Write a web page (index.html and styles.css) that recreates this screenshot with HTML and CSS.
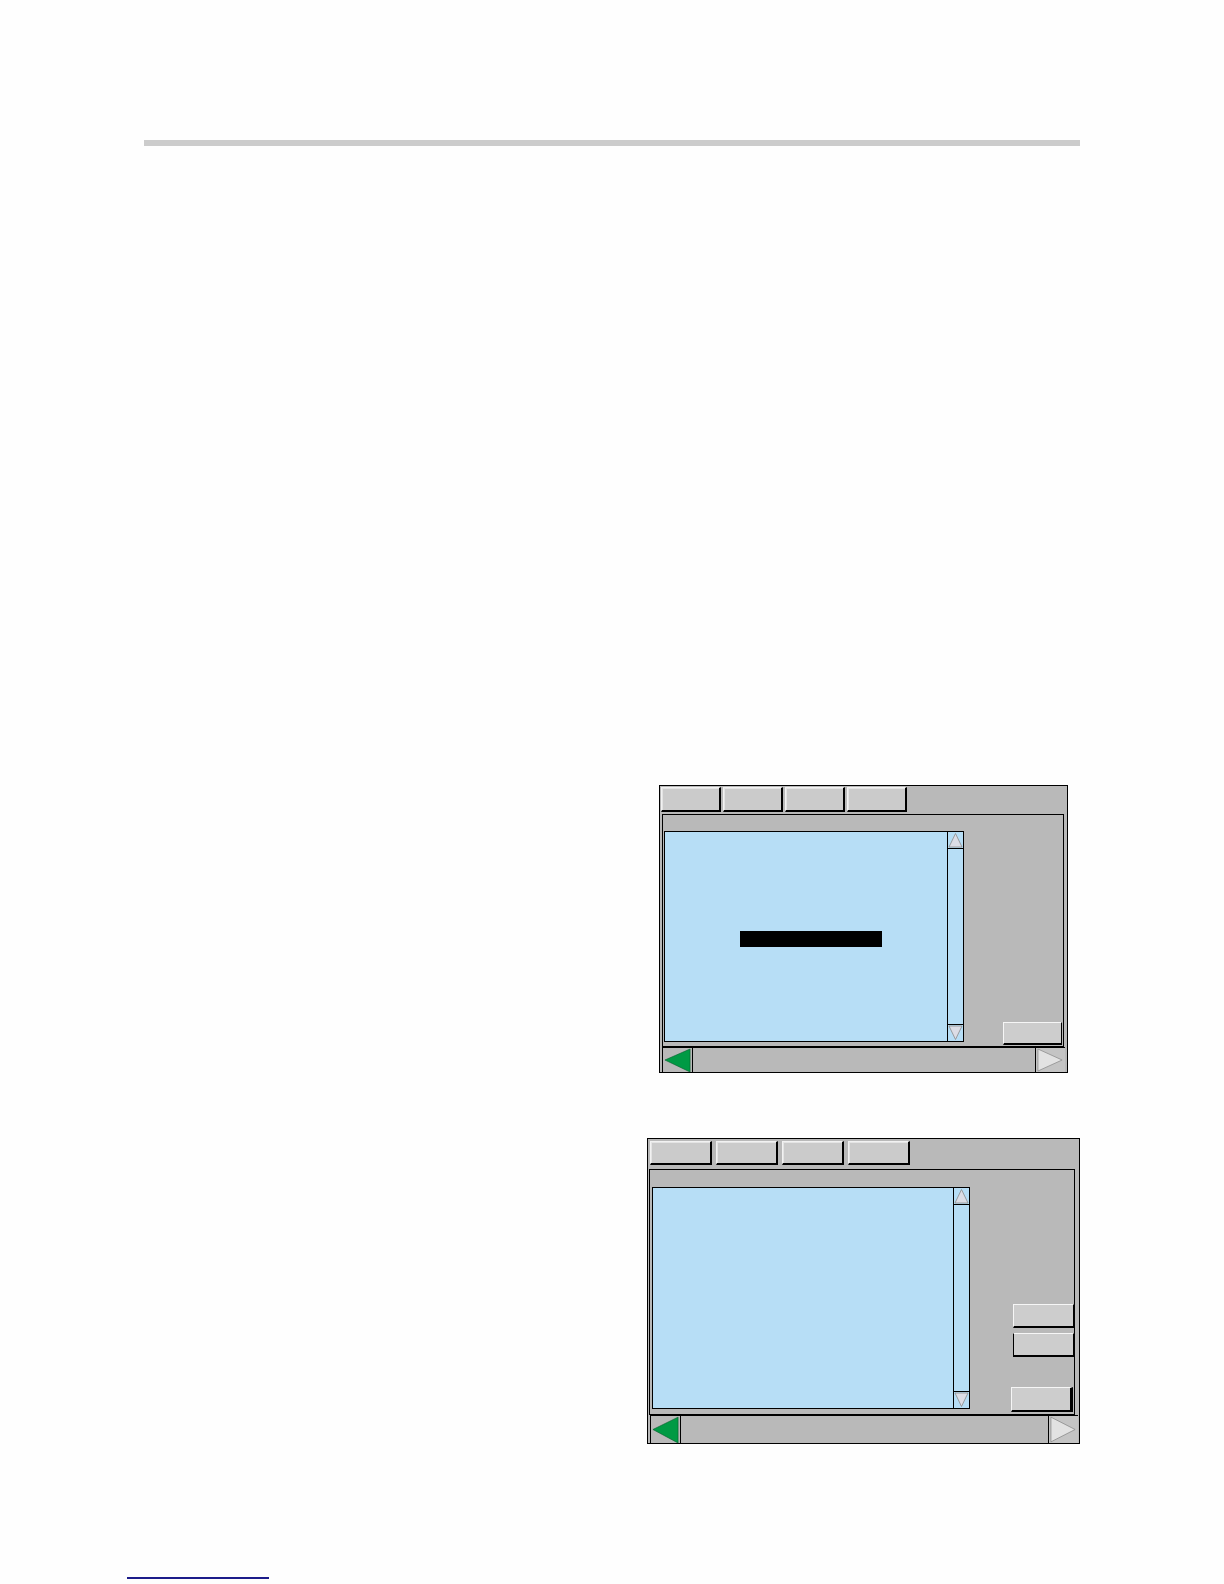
FILE: index.html
```html
<!DOCTYPE html>
<html lang="en">
<head>
<meta charset="utf-8">
<title>Dialogs</title>
<link rel="stylesheet" href="styles.css">
</head>
<body>
<div class="page">
  <div class="rule"></div>

  <div class="dlg dlg1">
    <div class="tabs">
      <div class="tab"></div><div class="tab"></div><div class="tab"></div><div class="tab"></div>
    </div>
    <div class="panel">
      <div class="list">
        <div class="list-body"><div class="blackbar"></div></div>
        <div class="scroll">
          <div class="arrow up"><svg viewBox="0 0 15 16" preserveAspectRatio="none"><polygon points="7.5,1.5 14,15 1,15" class="tri-s"/></svg></div>
          <div class="track"></div>
          <div class="arrow down"><svg viewBox="0 0 15 16" preserveAspectRatio="none"><polygon points="1,1 14,1 7.5,14.5" class="tri-s"/></svg></div>
        </div>
      </div>
      <div class="side">
        <div class="btn b-ok"></div>
      </div>
    </div>
    <div class="navbar">
      <div class="nav prev"><svg viewBox="0 0 30 24" preserveAspectRatio="none"><polygon points="2,12 28,1 28,24" class="tri-g"/></svg></div>
      <div class="nav-fill"></div>
      <div class="nav next"><svg viewBox="0 0 30 24" preserveAspectRatio="none"><polygon points="2,1 27,12 2,23" class="tri-n"/></svg></div>
    </div>
  </div>

  <div class="dlg dlg2">
    <div class="tabs">
      <div class="tab"></div><div class="tab"></div><div class="tab"></div><div class="tab"></div>
    </div>
    <div class="panel">
      <div class="list">
        <div class="list-body"></div>
        <div class="scroll">
          <div class="arrow up"><svg viewBox="0 0 15 16" preserveAspectRatio="none"><polygon points="7.5,1.5 14,15 1,15" class="tri-s"/></svg></div>
          <div class="track"></div>
          <div class="arrow down"><svg viewBox="0 0 15 16" preserveAspectRatio="none"><polygon points="1,1 14,1 7.5,14.5" class="tri-s"/></svg></div>
        </div>
      </div>
      <div class="side">
        <div class="btn b-a"></div>
        <div class="btn b-b"></div>
        <div class="btn b-c"></div>
      </div>
    </div>
    <div class="navbar">
      <div class="nav prev"><svg viewBox="0 0 30 24" preserveAspectRatio="none"><polygon points="2,12 28,1 28,24" class="tri-g"/></svg></div>
      <div class="nav-fill"></div>
      <div class="nav next"><svg viewBox="0 0 30 24" preserveAspectRatio="none"><polygon points="2,1 27,12 2,23" class="tri-n"/></svg></div>
    </div>
  </div>

  <div class="footline"></div>
</div>
</body>
</html>
```

FILE: styles.css
```css
* { box-sizing: border-box; }
html, body { margin: 0; padding: 0; background: #fefefe; font-family: "Liberation Sans", Arial, sans-serif; }
.page { display: flow-root; padding-top: 140px; width: 1224px; min-height: 1584px; }

.rule { margin-left: 144px; width: 936px; height: 6px; background: #cccccc; }

.dlg { display: flex; flex-direction: column; border: 1px solid #000; background: #b9b9b9; }
.dlg1 { margin: 639px 0 0 659px; width: 409px; height: 288px; }
.dlg2 { margin: 65px 0 0 647px; width: 433px; height: 306px; }

.tabs { display: flex; }
.dlg1 .tabs { padding: 1px 0 0 1px; gap: 2px; }
.dlg2 .tabs { padding: 2px 0 0 2px; gap: 4px; }
.tab { background: #cbcbcb; border-style: solid; border-width: 1px 2px 2px 1px; border-color: #f2f2f2 #000 #000 #f2f2f2; box-shadow: inset 1px 1px 0 #e4e4e4; }
.dlg1 .tab { width: 60px; height: 25px; }
.dlg2 .tab { width: 62px; height: 24px; }

.panel { display: flex; align-items: flex-end; border: 1px solid #000; background: #b9b9b9; }
.dlg1 .panel { margin: 2px 3px 0 2px; height: 233px; padding-left: 1px; }
.dlg2 .panel { margin: 4px 4px 0 1px; height: 246px; padding-left: 2px; }

.list { display: flex; border: 1px solid #000; background: #b7def6; }
.dlg1 .list { width: 300px; height: 211px; margin-bottom: 4px; }
.dlg2 .list { width: 318px; height: 222px; margin-bottom: 5px; }
.list-body { flex: 1; }
.dlg1 .list-body { padding: 99px 0 0 75px; }
.blackbar { width: 142px; height: 16px; background: #000; }

.scroll { width: 16px; border-left: 1px solid #000; display: flex; flex-direction: column; background: #b7def6; }
.arrow { height: 17px; }
.arrow svg { display: block; width: 100%; height: 100%; }
.arrow.up { border-bottom: 1px solid #000; }
.arrow.down { border-top: 1px solid #000; }
.track { flex: 1; }
.tri-s { fill: #dcdde6; stroke: #8a8a8a; stroke-width: 0.8; }

.side { margin-left: auto; display: flex; flex-direction: column; align-items: flex-end; }
.btn { background: #cdcdcd; border-style: solid; border-width: 1px 1px 2px 1px; border-color: #f6f6f6 #000 #000 #f6f6f6; }
.b-ok { width: 59px; height: 23px; margin: 0 1px 1px 0; }
.b-a { width: 61px; height: 24px; }
.b-b { width: 61px; height: 24px; margin-top: 5px; border-left-color: #000; }
.b-c { width: 62px; height: 25px; margin: 30px 1px 2px 0; border-right-width: 3px; }

.navbar { display: flex; flex: 1; border-top: 1px solid #000; border-left: 1px solid #000; }
.dlg1 .navbar { margin: 0 2px 0 2px; }
.dlg2 .navbar { margin: 0 1px 0 2px; }
.nav svg { display: block; width: 100%; height: 100%; }
.nav.prev { width: 30px; border-right: 1px solid #000; }
.nav.next { width: 30px; border-left: 1px solid #000; background: #c4c4c4; }
.nav-fill { flex: 1; }
.tri-g { fill: #009a44; stroke: #00602a; stroke-width: 0.6; }
.tri-n { fill: #e2e2e2; stroke: #8e8e8e; stroke-width: 0.8; }

.footline { margin: 133px 0 0 127px; width: 142px; height: 2px; background: #1c1c8a; }
```
